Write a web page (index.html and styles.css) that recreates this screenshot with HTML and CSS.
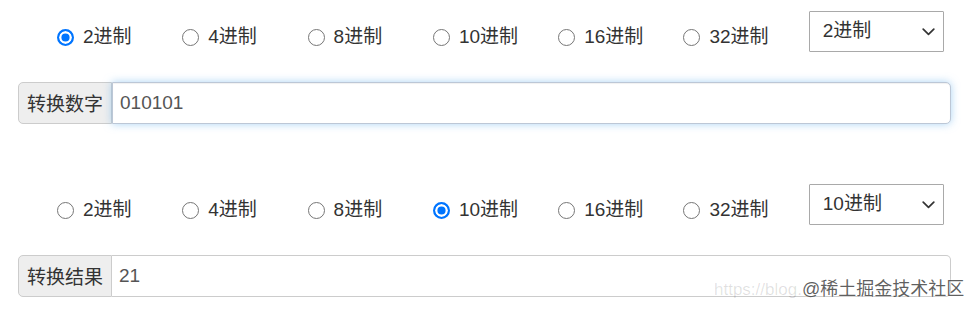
FILE: index.html
```html
<!DOCTYPE html>
<html lang="zh-CN">
<head>
<meta charset="utf-8">
<title>进制转换</title>
<link rel="stylesheet" href="styles.css">
</head>
<body>
<div class="page">
  <section class="block">
    <div class="radix-row">
      <label class="radio"><input type="radio" name="from" checked><span>2进制</span></label>
      <label class="radio"><input type="radio" name="from"><span>4进制</span></label>
      <label class="radio"><input type="radio" name="from"><span>8进制</span></label>
      <label class="radio"><input type="radio" name="from"><span>10进制</span></label>
      <label class="radio"><input type="radio" name="from"><span>16进制</span></label>
      <label class="radio"><input type="radio" name="from"><span>32进制</span></label>
      <div class="select-wrap">
        <select class="select"><option>2进制</option></select>
        <svg class="chevron" width="13" height="8" viewBox="0 0 13 8"><polyline points="1.2,1.2 6.5,6.3 11.8,1.2" fill="none" stroke="#333" stroke-width="1.7" stroke-linecap="round" stroke-linejoin="round"/></svg>
      </div>
    </div>
    <div class="input-group">
      <span class="addon">转换数字</span>
      <input class="field focus" type="text" value="010101">
    </div>
  </section>

  <section class="block second">
    <div class="radix-row">
      <label class="radio"><input type="radio" name="to"><span>2进制</span></label>
      <label class="radio"><input type="radio" name="to"><span>4进制</span></label>
      <label class="radio"><input type="radio" name="to"><span>8进制</span></label>
      <label class="radio"><input type="radio" name="to" checked><span>10进制</span></label>
      <label class="radio"><input type="radio" name="to"><span>16进制</span></label>
      <label class="radio"><input type="radio" name="to"><span>32进制</span></label>
      <div class="select-wrap">
        <select class="select"><option>10进制</option></select>
        <svg class="chevron" width="13" height="8" viewBox="0 0 13 8"><polyline points="1.2,1.2 6.5,6.3 11.8,1.2" fill="none" stroke="#333" stroke-width="1.7" stroke-linecap="round" stroke-linejoin="round"/></svg>
      </div>
    </div>
    <div class="input-group">
      <span class="addon">转换结果</span>
      <input class="field" type="text" value="21">
    </div>
  </section>
</div>
<div class="watermark">
  <span class="wm-url">https://blog.</span>
  <span class="wm-brand">@稀土掘金技术社区</span>
</div>
</body>
</html>
```
FILE: styles.css
```css
html, body {
  margin: 0;
  padding: 0;
  background: #fff;
}
body {
  font-family: "Liberation Sans", "Noto Sans CJK SC", sans-serif;
  font-size: 19px;
  color: #333;
  width: 973px;
  height: 311px;
  position: relative;
  overflow: hidden;
}
.page {
  padding: 11px 22px 0 18px;
}
.block {
  display: flex;
  flex-direction: column;
  gap: 30px;
}
.block.second {
  margin-top: 60px;
}
.radix-row {
  display: grid;
  grid-template-columns: repeat(6, 125.3px) 135px;
  padding-left: 39px;
  height: 41px;
}
.radio {
  display: flex;
  align-items: center;
  gap: 9px;
  height: 26px;
  margin-top: 13px;
  line-height: 26px;
  white-space: nowrap;
}
.radio input {
  appearance: none;
  -webkit-appearance: none;
  margin: 0;
  width: 17px;
  height: 17px;
  border-radius: 50%;
  border: 1.3px solid #767676;
  background: #fff;
  box-sizing: border-box;
  flex: none;
}
.radio input:checked {
  border: 2px solid #0075ff;
  background: #0075ff;
  box-shadow: inset 0 0 0 2.4px #fff;
}
.select-wrap {
  position: relative;
  width: 135px;
  height: 41px;
}
.select {
  appearance: none;
  -webkit-appearance: none;
  width: 135px;
  height: 41px;
  margin: 0;
  box-sizing: border-box;
  border: 1px solid #a9a9a9;
  border-radius: 1px;
  background: #fff;
  padding: 0 12px 2px 13px;
  font: inherit;
  color: #333;
}
.chevron {
  position: absolute;
  right: 9px;
  top: 17px;
  pointer-events: none;
}
.input-group {
  display: flex;
  height: 42px;
}
.addon {
  display: flex;
  align-items: center;
  box-sizing: border-box;
  width: 94px;
  padding: 0 8px 1px;
  background: #eee;
  border: 1px solid #ccc;
  border-radius: 5px 0 0 5px;
  color: #333;
  white-space: nowrap;
}
.field {
  flex: 1;
  min-width: 0;
  box-sizing: border-box;
  height: 42px;
  margin: 0;
  padding: 0 7px 1px;
  border: 1px solid #ccc;
  border-left: 0;
  border-radius: 0 5px 5px 0;
  font: inherit;
  color: #555;
  background: #fff;
  outline: none;
}
.field.focus {
  border: 1px solid #bcc7d6;
  box-shadow: 0 0 8px rgba(102, 175, 233, 0.55), inset 0 1px 1px rgba(0, 0, 0, 0.06);
}
.watermark {
  position: absolute;
  left: 714px;
  top: 277px;
  height: 24px;
  display: flex;
  align-items: baseline;
  gap: 0;
  white-space: nowrap;
}
.wm-url {
  font-size: 17px;
  color: rgba(0, 0, 0, 0.12);
  font-family: "Liberation Sans", sans-serif;
}
.wm-brand {
  font-size: 18px;
  line-height: 24px;
  color: rgba(60, 60, 60, 0.82);
  text-shadow: 0 0 2px rgba(255, 255, 255, 0.9);
}
```
